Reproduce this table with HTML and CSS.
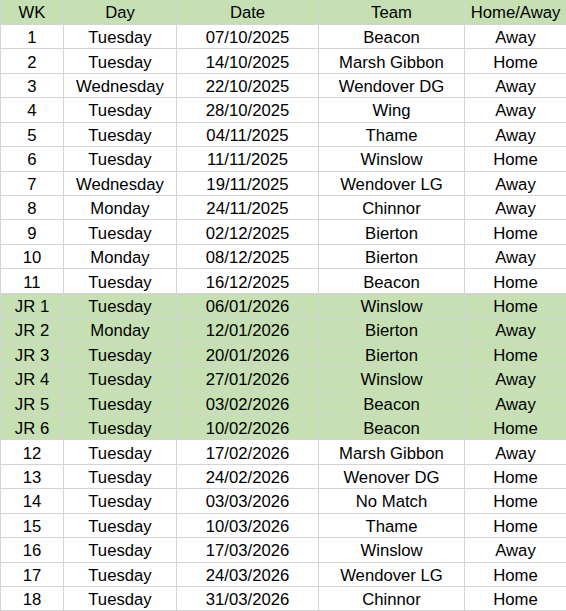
FILE: index.html
```html
<!DOCTYPE html>
<html>
<head>
<meta charset="utf-8">
<link rel="stylesheet" href="styles.css">
</head>
<body>
<table class="fixtures">
<colgroup>
<col class="c-wk"><col class="c-day"><col class="c-date"><col class="c-team"><col class="c-ha">
</colgroup>
<thead>
<tr class="hl"><th>WK</th><th>Day</th><th>Date</th><th>Team</th><th>Home/Away</th></tr>
</thead>
<tbody>
<tr><td>1</td><td>Tuesday</td><td>07/10/2025</td><td>Beacon</td><td>Away</td></tr>
<tr><td>2</td><td>Tuesday</td><td>14/10/2025</td><td>Marsh Gibbon</td><td>Home</td></tr>
<tr><td>3</td><td>Wednesday</td><td>22/10/2025</td><td>Wendover DG</td><td>Away</td></tr>
<tr><td>4</td><td>Tuesday</td><td>28/10/2025</td><td>Wing</td><td>Away</td></tr>
<tr><td>5</td><td>Tuesday</td><td>04/11/2025</td><td>Thame</td><td>Away</td></tr>
<tr><td>6</td><td>Tuesday</td><td>11/11/2025</td><td>Winslow</td><td>Home</td></tr>
<tr><td>7</td><td>Wednesday</td><td>19/11/2025</td><td>Wendover LG</td><td>Away</td></tr>
<tr><td>8</td><td>Monday</td><td>24/11/2025</td><td>Chinnor</td><td>Away</td></tr>
<tr><td>9</td><td>Tuesday</td><td>02/12/2025</td><td>Bierton</td><td>Home</td></tr>
<tr><td>10</td><td>Monday</td><td>08/12/2025</td><td>Bierton</td><td>Away</td></tr>
<tr><td>11</td><td>Tuesday</td><td>16/12/2025</td><td>Beacon</td><td>Home</td></tr>
<tr class="hl"><td>JR 1</td><td>Tuesday</td><td>06/01/2026</td><td>Winslow</td><td>Home</td></tr>
<tr class="hl"><td>JR 2</td><td>Monday</td><td>12/01/2026</td><td>Bierton</td><td>Away</td></tr>
<tr class="hl"><td>JR 3</td><td>Tuesday</td><td>20/01/2026</td><td>Bierton</td><td>Home</td></tr>
<tr class="hl"><td>JR 4</td><td>Tuesday</td><td>27/01/2026</td><td>Winslow</td><td>Away</td></tr>
<tr class="hl"><td>JR 5</td><td>Tuesday</td><td>03/02/2026</td><td>Beacon</td><td>Away</td></tr>
<tr class="hl"><td>JR 6</td><td>Tuesday</td><td>10/02/2026</td><td>Beacon</td><td>Home</td></tr>
<tr><td>12</td><td>Tuesday</td><td>17/02/2026</td><td>Marsh Gibbon</td><td>Away</td></tr>
<tr><td>13</td><td>Tuesday</td><td>24/02/2026</td><td>Wenover DG</td><td>Home</td></tr>
<tr><td>14</td><td>Tuesday</td><td>03/03/2026</td><td>No Match</td><td>Home</td></tr>
<tr><td>15</td><td>Tuesday</td><td>10/03/2026</td><td>Thame</td><td>Home</td></tr>
<tr><td>16</td><td>Tuesday</td><td>17/03/2026</td><td>Winslow</td><td>Away</td></tr>
<tr><td>17</td><td>Tuesday</td><td>24/03/2026</td><td>Wendover LG</td><td>Home</td></tr>
<tr><td>18</td><td>Tuesday</td><td>31/03/2026</td><td>Chinnor</td><td>Home</td></tr>
</tbody>
</table>
</body>
</html>
```
FILE: styles.css
```css
html, body {
  margin: 0;
  padding: 0;
  background: #ffffff;
}
.fixtures {
  width: 566px;
  height: 611px;
  border-collapse: collapse;
  table-layout: fixed;
  font-family: "Liberation Sans", Arial, sans-serif;
  font-size: 16.7px;
  color: #000000;
}
.c-wk { width: 63px; }
.c-day { width: 113px; }
.c-date { width: 142px; }
.c-team { width: 146px; }
.c-ha { width: 102px; }
.fixtures th,
.fixtures td {
  border: 1px solid #d4d4d4;
  padding: 3px 0 0 0;
  text-align: center;
  vertical-align: middle;
  font-weight: normal;
  line-height: 18px;
}
.fixtures thead th {
  border-top: none;
}
.fixtures tr {
  height: 24.44px;
}
.fixtures .hl th,
.fixtures .hl td {
  background: #c6e0b4;
}
```
